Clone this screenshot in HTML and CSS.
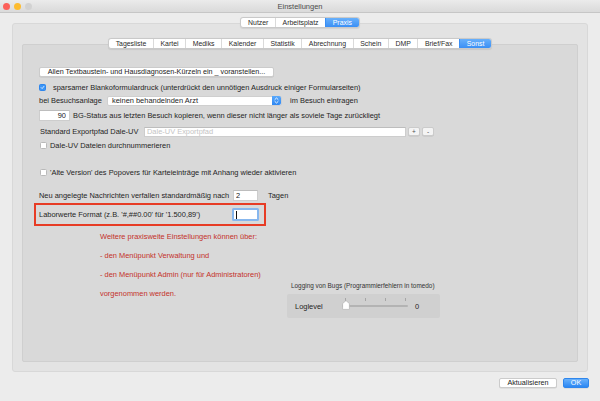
FILE: index.html
```html
<!DOCTYPE html>
<html lang="de">
<head>
    <meta charset="UTF-8">
    <meta name="viewport" content="width=device-width, initial-scale=1.0">
    <title>Einstellungen</title>
    <link rel="stylesheet" href="styles.css">
</head>
<body>
    <div class="window">
        <div class="titlebar">
            <div class="lights">
                <span class="light red"></span>
                <span class="light yellow"></span>
                <span class="light grey"></span>
            </div>
            <div class="title">Einstellungen</div>
            <div></div>
        </div>

        <div class="outer-box">
            <div class="tabs top-tabs">
                <div class="tab-strip">
                    <span class="tab">Nutzer</span>
                    <span class="tab">Arbeitsplatz</span>
                    <span class="tab active">Praxis</span>
                </div>
            </div>

            <div class="inner-box">
                <div class="tabs sub-tabs">
                    <div class="tab-strip">
                        <span class="tab">Tagesliste</span>
                        <span class="tab">Kartei</span>
                        <span class="tab">Mediks</span>
                        <span class="tab">Kalender</span>
                        <span class="tab">Statistik</span>
                        <span class="tab">Abrechnung</span>
                        <span class="tab">Schein</span>
                        <span class="tab">DMP</span>
                        <span class="tab">Brief/Fax</span>
                        <span class="tab active">Sonst</span>
                    </div>
                </div>

                <div class="content">
                    <div class="row row-first">
                        <button class="mac-button wide-button">Allen Textbaustein- und Hausdiagnosen-Kürzeln ein _ voranstellen...</button>
                    </div>

                    <div class="row row-check1">
                        <span class="checkbox checked">
                            <svg width="7" height="7" viewBox="0 0 7 7"><path d="M1.6 3.6 L3 5 L5.5 1.9" fill="none" stroke="#fff" stroke-width="1.1" stroke-linecap="round" stroke-linejoin="round"/></svg>
                        </span>
                        <span class="check-label">sparsamer Blankoformulardruck (unterdrückt den unnötigen Ausdruck einiger Formularseiten)</span>
                    </div>

                    <div class="row row-popup">
                        <span class="popup-label">bei Besuchsanlage</span>
                        <div class="popup">
                            <span class="popup-text">keinen behandelnden Arzt</span>
                            <span class="popup-arrows">
                                <svg width="9" height="9" viewBox="0 0 9 9"><path d="M2.7 3.7 L4.5 2 L6.3 3.7 M2.7 5.3 L4.5 7 L6.3 5.3" fill="none" stroke="#fff" stroke-width="0.9"/></svg>
                            </span>
                        </div>
                        <span class="after-popup">im Besuch eintragen</span>
                    </div>

                    <div class="row row-days">
                        <input class="field field-days" type="text" value="90" readonly>
                        <span class="days-label">BG-Status aus letzten Besuch kopieren, wenn dieser nicht länger als soviele Tage zurückliegt</span>
                    </div>

                    <div class="row row-export">
                        <span class="export-label">Standard Exportpfad Dale-UV</span>
                        <input class="field field-path" type="text" placeholder="Dale-UV Exportpfad" readonly>
                        <button class="mac-button small-button">+</button>
                        <button class="mac-button small-button">-</button>
                    </div>

                    <div class="row row-dale">
                        <span class="checkbox"></span>
                        <span class="check-label">Dale-UV Dateien durchnummerieren</span>
                    </div>

                    <div class="row row-alte">
                        <span class="checkbox"></span>
                        <span class="check-label">'Alte Version' des Popovers für Karteieinträge mit Anhang wieder aktivieren</span>
                    </div>

                    <div class="row row-neu">
                        <span class="neu-label">Neu angelegte Nachrichten verfallen standardmäßig nach</span>
                        <input class="field field-neu" type="text" value="2" readonly>
                        <span class="tagen">Tagen</span>
                    </div>

                    <div class="highlight-box">
                        <span>Laborwerte Format (z.B. '#,##0.00' für '1.500,89')</span>
                        <div class="field focus-field"><span class="caret"></span></div>
                    </div>

                    <div class="bottom-area">
                        <div class="hint-text">
                            <p>Weitere praxisweite Einstellungen können über:</p>
                            <p>- den Menüpunkt Verwaltung und</p>
                            <p>- den Menüpunkt Admin (nur für Administratoren)</p>
                            <p>vorgenommen werden.</p>
                        </div>

                        <div class="logging">
                            <div class="logging-title">Logging von Bugs (Programmierfehlern in tomedo)</div>
                            <div class="logging-box">
                                <span class="loglevel-label">Loglevel</span>
                                <div class="slider">
                                    <span class="tick" style="left: 3px"></span>
                                    <span class="tick" style="left: 23px"></span>
                                    <span class="tick" style="left: 43px"></span>
                                    <span class="tick" style="left: 63px"></span>
                                    <span class="track"></span>
                                    <svg class="knob" width="8" height="10" viewBox="0 0 8 10"><path d="M4 0.6 L7.4 3.6 L7.4 8.6 Q7.4 9.4 6.6 9.4 L1.4 9.4 Q0.6 9.4 0.6 8.6 L0.6 3.6 Z" fill="#fff" stroke="#a8a8a8" stroke-width="0.6"/></svg>
                                </div>
                                <span class="slider-value">0</span>
                            </div>
                        </div>
                    </div>
                </div>
            </div>
        </div>

        <div class="footer">
            <button class="mac-button footer-button">Aktualisieren</button>
            <button class="mac-button footer-button ok-button">OK</button>
        </div>
    </div>
</body>
</html>
```

FILE: styles.css
```css
* {
    box-sizing: border-box;
}

body {
    margin: 0;
    width: 600px;
    height: 401px;
    overflow: hidden;
    background-color: #ececec;
    font-family: "Liberation Sans", Arial, sans-serif;
    font-size: 7.45px;
    color: #1f1f1f;
}

.window {
    height: 401px;
    display: flex;
    flex-direction: column;
}

/* title bar */
.titlebar {
    height: 13px;
    display: grid;
    grid-template-columns: 1fr auto 1fr;
    align-items: center;
    background: linear-gradient(#ebebeb, #dadada);
    border-bottom: 1px solid #c6c6c6;
}

.lights {
    display: flex;
    gap: 4px;
    padding-left: 3px;
}

.light {
    width: 7px;
    height: 7px;
    border-radius: 50%;
}

.light.red {
    background-color: #fc605a;
}

.light.yellow {
    background-color: #fdbc2f;
}

.light.grey {
    background-color: #d2d2d2;
}

.title {
    font-size: 7.5px;
    color: #4b4b4b;
}

/* boxes */
.outer-box {
    margin: 10px 12px 0;
    background-color: #e3e3e3;
    border: 1px solid #d8d8d8;
    border-radius: 3px;
    padding: 0 9px 9px;
}

.inner-box {
    margin-top: 16px;
    height: 318px;
    background-color: #d9d9d9;
    border: 1px solid #cfcfcf;
    border-radius: 2px;
    padding-left: 16px;
}

/* tabs */
.tabs {
    display: flex;
    justify-content: center;
}

.top-tabs {
    margin-top: -7px;
}

.sub-tabs {
    margin-top: -7px;
    margin-left: -16px;
}

.tab-strip {
    display: flex;
    background-color: #fff;
    border: 1px solid #c9c9c9;
    border-radius: 3px;
    box-shadow: 0 0.5px 1px rgba(0, 0, 0, 0.08);
}

.tab {
    font-size: 6.9px;
    line-height: 9px;
    padding: 0 6.6px;
    color: #2a2a2a;
    border-left: 1px solid #dadada;
}

.tab:first-child {
    border-left: none;
}

.tab.active {
    background: linear-gradient(#68b0fb, #3a8ff5);
    color: #fff;
    border-left-color: #3a8ff5;
}

.tab.active:last-child {
    border-radius: 0 2px 2px 0;
}

/* content rows */
.content {
    display: flex;
    flex-direction: column;
}

.row {
    display: flex;
    align-items: center;
    height: 11px;
    white-space: nowrap;
}

.row-first {
    margin-top: 18px;
    height: 10px;
}

.row-check1 {
    margin-top: 5px;
}

.row-popup {
    margin-top: 2px;
}

.row-days {
    margin-top: 4px;
}

.row-export {
    margin-top: 5px;
}

.row-dale {
    margin-top: 3px;
}

.row-alte {
    margin-top: 16px;
}

.row-neu {
    margin-top: 12px;
}

.mac-button {
    font-family: inherit;
    font-size: 7.2px;
    color: #222;
    background-color: #fff;
    border: 1px solid #cbcbcb;
    border-radius: 2px;
    box-shadow: 0 0.5px 0.5px rgba(0, 0, 0, 0.12);
    padding: 0;
    line-height: 8px;
    height: 10px;
}

.wide-button {
    width: 235px;
}

.checkbox {
    width: 7px;
    height: 7px;
    flex-shrink: 0;
    background-color: #fff;
    border: 1px solid #b9b9b9;
    border-radius: 1.5px;
    display: flex;
    align-items: center;
    justify-content: center;
}

.checkbox.checked {
    background-color: #3b95f7;
    border-color: #2f86ec;
}

.row-check1 .check-label {
    margin-left: 7px;
}

.row-dale .checkbox,
.row-alte .checkbox {
    margin-left: 1px;
}

.row-dale .check-label {
    margin-left: 3px;
}

.row-alte .check-label {
    margin-left: 3px;
}

.popup-label {
    width: 68px;
}

.popup {
    width: 175px;
    height: 10px;
    background-color: #fff;
    border: 1px solid #cfcfcf;
    border-radius: 2px;
    display: flex;
    align-items: center;
    justify-content: space-between;
}

.popup-text {
    padding-left: 4px;
}

.popup-arrows {
    width: 9px;
    height: 9px;
    background: linear-gradient(#5aa9fb, #2f87f2);
    border-radius: 0 2px 2px 0;
    display: flex;
}

.after-popup {
    margin-left: 8px;
}

.field {
    font-family: inherit;
    font-size: 7.45px;
    color: #222;
    background-color: #fff;
    border: 1px solid #cdcdcd;
    border-top-color: #bdbdbd;
    height: 11px;
    padding: 0 2px;
    outline: none;
}

.field::placeholder {
    color: #c4c4c4;
}

.field-days {
    width: 31px;
    text-align: right;
    padding-right: 3px;
}

.days-label {
    margin-left: 3px;
}

.export-label {
    margin-left: 1px;
    width: 104px;
}

.field-path {
    width: 262px;
    height: 10px;
}

.small-button {
    width: 12px;
    height: 9px;
    margin-left: 2px;
    font-size: 6.5px;
    color: #555;
    background-color: #f4f4f4;
}

.neu-label {
    width: 194px;
}

.field-neu {
    width: 25px;
}

.tagen {
    margin-left: 10px;
}

/* red marked row */
.highlight-box {
    margin-top: 2px;
    margin-left: -5px;
    width: 232px;
    height: 23px;
    border: 2px solid #e73c25;
    display: flex;
    align-items: center;
    justify-content: space-between;
    padding: 0 5px 0 3px;
    white-space: nowrap;
}

.focus-field {
    width: 27px;
    height: 13px;
    border: 2px solid #87b7ee;
    border-radius: 1.5px;
    display: flex;
    align-items: center;
    padding-left: 2px;
}

.caret {
    width: 1px;
    height: 8px;
    background-color: #111;
}

/* bottom part */
.bottom-area {
    display: flex;
    margin-top: 1px;
}

.hint-text {
    margin-left: 61px;
    width: 187px;
    color: #c4312a;
}

.hint-text p {
    margin: 0;
    line-height: 19px;
    white-space: nowrap;
}

.logging {
    margin-top: 54px;
}

.logging-title {
    font-size: 6.4px;
    line-height: 9px;
    padding-left: 4px;
    color: #333;
    white-space: nowrap;
}

.logging-box {
    margin-top: 4px;
    width: 153px;
    height: 24px;
    background-color: #d0d0d0;
    border-radius: 2px;
    display: flex;
    align-items: center;
    padding-left: 8px;
}

.loglevel-label {
    width: 47px;
}

.slider {
    position: relative;
    width: 66px;
    height: 16px;
}

.track {
    position: absolute;
    left: 0;
    right: 0;
    top: 7px;
    height: 2px;
    border-radius: 1px;
    background-color: #b3b3b3;
}

.tick {
    position: absolute;
    top: 0;
    width: 1px;
    height: 3px;
    background-color: #a6a6a6;
}

.knob {
    position: absolute;
    left: -0.5px;
    top: 2px;
}

.slider-value {
    margin-left: 7px;
}

/* footer */
.footer {
    display: flex;
    justify-content: flex-end;
    gap: 6px;
    padding-right: 11px;
    margin-top: 6px;
}

.footer-button {
    width: 58px;
}

.ok-button {
    width: 26px;
    color: #fff;
    background: linear-gradient(#69b1fb, #2b87f3);
    border-color: #2f86ec;
}
```
